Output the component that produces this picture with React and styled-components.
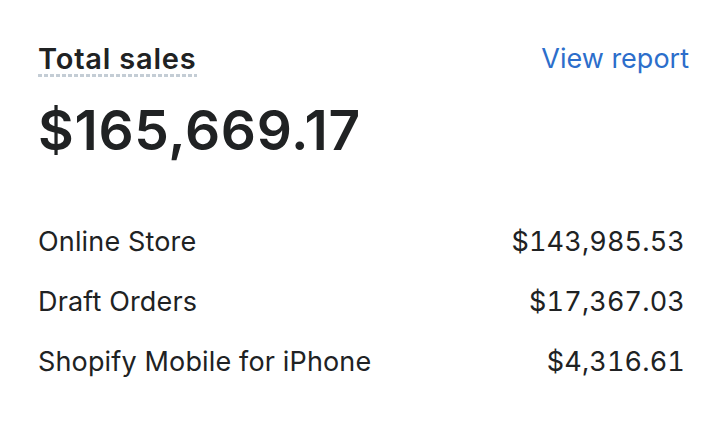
import styled, { createGlobalStyle } from "styled-components";

const GlobalStyle = createGlobalStyle`
  body {
    margin: 0;
    background: #ffffff;
    font-family: Inter, "Noto Sans", "Liberation Sans", sans-serif;
    color: #202223;
  }
`;

const Card = styled.div`
  width: 722px;
  height: 428px;
  box-sizing: border-box;
  padding: 41px 33px 0 38px;
  background: #ffffff;
`;

const Header = styled.div`
  display: flex;
  justify-content: space-between;
  align-items: flex-start;
`;

const Title = styled.h2`
  margin: 0;
  font-size: 29px;
  line-height: 36px;
  font-weight: 600;
  letter-spacing: 0.8px;
  color: #202223;
  background: linear-gradient(to right, #c4cdd5 66%, transparent 0) left bottom / 6px 3px repeat-x;
`;

const ReportLink = styled.a`
  font-size: 27px;
  line-height: 36px;
  font-weight: 400;
  color: #2c6ecb;
  text-decoration: none;
`;

const Total = styled.div`
  margin-top: 21px;
  font-size: 55px;
  line-height: 64px;
  font-weight: 600;
  color: #202223;
  letter-spacing: 0.7px;
`;

const Breakdown = styled.ul`
  list-style: none;
  margin: 62px 4px 0 0;
  padding: 0;
  display: flex;
  flex-direction: column;
  gap: 24px;
`;

const Row = styled.li`
  display: flex;
  justify-content: space-between;
  font-size: 27px;
  line-height: 36px;
  letter-spacing: 0.15px;
  color: #202223;
`;

const Amount = styled.span`
  font-variant-numeric: tabular-nums;
`;

const channels = [
  { name: "Online Store", amount: "$143,985.53" },
  { name: "Draft Orders", amount: "$17,367.03" },
  { name: "Shopify Mobile for iPhone", amount: "$4,316.61" },
];

export default function App() {
  return (
    <>
      <GlobalStyle />
      <Card>
        <Header>
          <Title>Total sales</Title>
          <ReportLink href="#">View report</ReportLink>
        </Header>
        <Total>$165,669.17</Total>
        <Breakdown>
          {channels.map(c => (
            <Row key={c.name}>
              <span>{c.name}</span>
              <Amount>{c.amount}</Amount>
            </Row>
          ))}
        </Breakdown>
      </Card>
    </>
  );
}
